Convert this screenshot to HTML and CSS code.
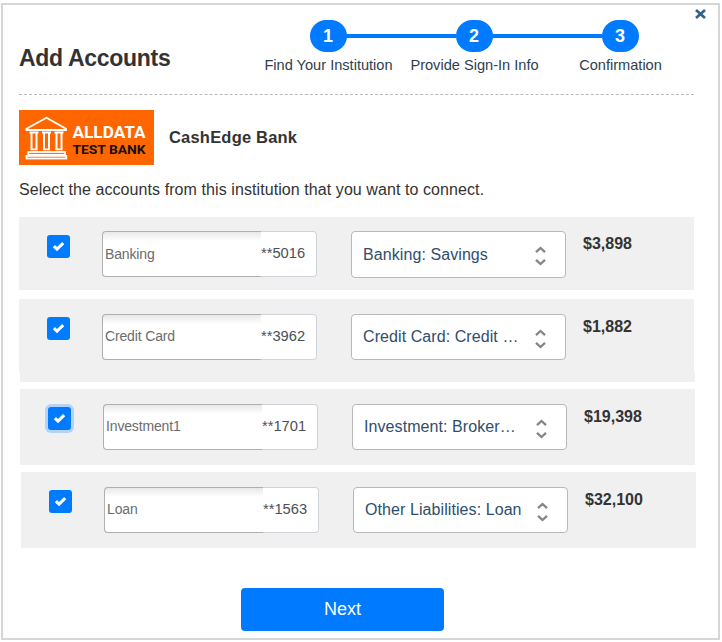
FILE: index.html
```html
<!DOCTYPE html>
<html lang="en">
<head>
<meta charset="utf-8">
<title>Add Accounts</title>
<link rel="stylesheet" href="styles.css">
</head>
<body>
<svg class="defs" width="0" height="0" aria-hidden="true">
  <symbol id="check" viewBox="0 0 23 23"><path d="M6.9 11.2 10 14.2 16.2 8.2" fill="none" stroke="#fff" stroke-width="3"/></symbol>
  <symbol id="sort" viewBox="0 0 12 20"><path d="M1 6.200 5.500 2 10 6.200M1 13.800 5.500 18 10 13.800" fill="none" stroke="#858585" stroke-width="2.300"/></symbol>
</svg>
<main class="dialog">
  <button class="close" aria-label="Close"><svg width="11" height="10" viewBox="0 0 11 10"><path d="M1 1 10 9M10 1 1 9" stroke="#2f628c" stroke-width="2.700"/></svg></button>
  <header class="header">
    <h1 class="title">Add Accounts</h1>
    <ol class="steps">
      <li class="step"><span class="dot">1</span><span class="label">Find Your Institution</span></li>
      <li class="step"><span class="dot">2</span><span class="label">Provide Sign-In Info</span></li>
      <li class="step"><span class="dot">3</span><span class="label">Confirmation</span></li>
    </ol>
  </header>
  <section class="bank">
    <svg class="logo" width="135" height="55" viewBox="0 0 135 55">
      <rect width="135" height="55" fill="#ff6600"/>
      <g fill="none" stroke="#fff" stroke-width="1.800">
        <path d="M7.500 18.800 27.500 7.800 47 18.800V20H7.500Z"/>
        <path d="M12.500 22V39.500M17.500 22V39.500M25 22V39.500M30 22V39.500M37.500 22V39.500M42.500 22V39.500" stroke-width="2"/>
        <path d="M10.500 22.500H19.500M23 22.500H32M35.500 22.500H44.500M11.500 39.300H18.500M24 39.300H31M36.500 39.300H43.500"/>
        <rect x="9.300" y="42" width="36.700" height="2.800"/>
        <rect x="7.500" y="45.900" width="39.800" height="2.600"/>
      </g>
      <text class="logo-top" x="53.500" y="28" textLength="73" lengthAdjust="spacingAndGlyphs">ALLDATA</text>
      <text class="logo-bottom" x="53.500" y="44.300" textLength="73" lengthAdjust="spacingAndGlyphs">TEST BANK</text>
    </svg>
    <h2 class="bank-name">CashEdge Bank</h2>
  </section>
  <p class="hint">Select the accounts from this institution that you want to connect.</p>
  <section class="accounts">
    <div class="account banking">
      <span class="check"><svg width="23" height="23"><use href="#check"/></svg></span>
      <div class="field"><span class="name">Banking</span><span class="number">**5016</span></div>
      <div class="select"><span class="value">Banking: Savings</span><svg width="12" height="20"><use href="#sort"/></svg></div>
      <strong class="amount">$3,898</strong>
    </div>
    <div class="account credit">
      <span class="check"><svg width="23" height="23"><use href="#check"/></svg></span>
      <div class="field"><span class="name">Credit Card</span><span class="number">**3962</span></div>
      <div class="select"><span class="value">Credit Card: Credit …</span><svg width="12" height="20"><use href="#sort"/></svg></div>
      <strong class="amount">$1,882</strong>
    </div>
    <div class="account investment">
      <span class="check focused"><svg width="23" height="23"><use href="#check"/></svg></span>
      <div class="field"><span class="name">Investment1</span><span class="number">**1701</span></div>
      <div class="select"><span class="value">Investment: Broker…</span><svg width="12" height="20"><use href="#sort"/></svg></div>
      <strong class="amount">$19,398</strong>
    </div>
    <div class="account loan">
      <span class="check"><svg width="23" height="23"><use href="#check"/></svg></span>
      <div class="field"><span class="name">Loan</span><span class="number">**1563</span></div>
      <div class="select"><span class="value">Other Liabilities: Loan</span><svg width="12" height="20"><use href="#sort"/></svg></div>
      <strong class="amount">$32,100</strong>
    </div>
  </section>
  <button class="next">Next</button>
</main>
</body>
</html>
```
FILE: styles.css
```css
* { box-sizing: border-box; }
body {
  margin: 0;
  padding: 3px 0 0 1px;
  background: #fff;
  color: #333;
  font-family: "Liberation Sans", Arial, sans-serif;
  font-size: 16px;
}
.defs { display: block; }
.dialog {
  position: relative;
  width: 719px;
  height: 637px;
  border: 2px solid #d6d6d6;
  padding: 0 16px;
}
.close {
  position: absolute;
  top: 4px;
  right: 12px;
  width: 11px;
  height: 10px;
  padding: 0;
  border: 0;
  background: none;
}
.close svg { display: block; }
.header {
  display: flex;
  width: 675px;
  height: 90px;
  padding-top: 15px;
  border-bottom: 1px dashed #b9b9b9;
}
.title {
  margin: 25px 0 0;
  width: 236px;
  font-size: 23px;
  letter-spacing: -0.3px;
  line-height: 27px;
  white-space: nowrap;
}
.steps {
  display: flex;
  margin: 0;
  padding: 0;
  list-style: none;
}
.step {
  position: relative;
  display: flex;
  flex-direction: column;
  align-items: center;
  width: 146px;
}
.step + .step::before {
  content: "";
  position: absolute;
  top: 14px;
  left: -55px;
  width: 110px;
  height: 4px;
  background: #007bff;
}
.dot {
  width: 37px;
  height: 32px;
  border-radius: 16px;
  background: #007bff;
  color: #fff;
  font-weight: bold;
  font-size: 18px;
  line-height: 32px;
  text-align: center;
}
.label {
  margin: 4px 0 0 1px;
  color: #2f3e50;
  font-size: 14.6px;
  line-height: 18px;
  white-space: nowrap;
}
.bank {
  display: flex;
  align-items: center;
  gap: 15px;
  margin-top: 15px;
}
.logo-top, .logo-bottom {
  font-family: Roboto, sans-serif;
  font-weight: bold;
  font-size: 16.2px;
  fill: #fff;
}
.logo-bottom { font-size: 13px; fill: #111; }
.bank-name {
  margin: 0 0 2px;
  font-size: 16.5px;
  letter-spacing: 0.2px;
  line-height: 20px;
}
.hint {
  margin: 15px 0 0;
  letter-spacing: 0.08px;
  line-height: 19px;
}
.accounts { margin-top: 18px; }
.account {
  display: flex;
  align-items: flex-start;
  width: 675px;
  height: 76px;
  padding: 15px 0 0 28px;
  background: #f0f0f0;
}
.banking { height: 73px; padding-top: 14px; margin-bottom: 9px; }
.credit {
  width: 676px;
  height: 83px;
  margin-bottom: 7px;
  background:
    linear-gradient(#f0f0f0, #f0f0f0) 0 0 / 675px 74px no-repeat,
    linear-gradient(#f0f0f0, #f0f0f0) 1px 74px / 675px 9px no-repeat;
}
.investment { margin: 0 0 7px 1px; }
.loan { margin-left: 2px; }
.check {
  width: 23px;
  height: 23px;
  margin: 3px 32px 0 0;
  border-radius: 3px;
  background: #007bff;
}
.banking .check { margin-top: 4px; }
.check svg { display: block; }
.focused { box-shadow: 0 0 0 3px #b3d4f7; }
.field {
  display: flex;
  width: 215px;
  height: 46px;
  line-height: 42px;
  font-size: 14px;
}
.banking .field { line-height: 44px; }
.name {
  width: 159px;
  padding-left: 2px;
  border: 1px solid #afafaf;
  border-right: 0;
  border-radius: 4px 0 0 4px;
  background: linear-gradient(#e8e8e8, #fff 9px);
  color: #6c6c6c;
  letter-spacing: -0.15px;
}
.number {
  flex: 1;
  border: 1px solid #ced4da;
  border-left: 0;
  border-radius: 0 4px 4px 0;
  background: #fff;
  color: #495057;
  font-size: 14.7px;
}
.banking .number { line-height: 43px; }
.select {
  display: flex;
  align-items: center;
  justify-content: space-between;
  width: 215px;
  height: 46px;
  margin-left: 34px;
  padding: 0 18px 0 11px;
  border: 1px solid #b8b8b8;
  border-radius: 4px;
  background: #fff;
  color: #2f4e6b;
  letter-spacing: 0.08px;
  white-space: nowrap;
}
.banking .select { height: 47px; }
.select svg { margin-top: 3px; }
.amount {
  margin: 4px 0 0 17px;
  line-height: 18px;
}
.next {
  display: block;
  width: 203px;
  height: 43px;
  margin: 40px 0 0 222px;
  padding: 0 0 2px;
  border: 0;
  border-radius: 4px;
  background: #007bff;
  color: #fff;
  font: 18px/40px "Liberation Sans", Arial, sans-serif;
}
```
